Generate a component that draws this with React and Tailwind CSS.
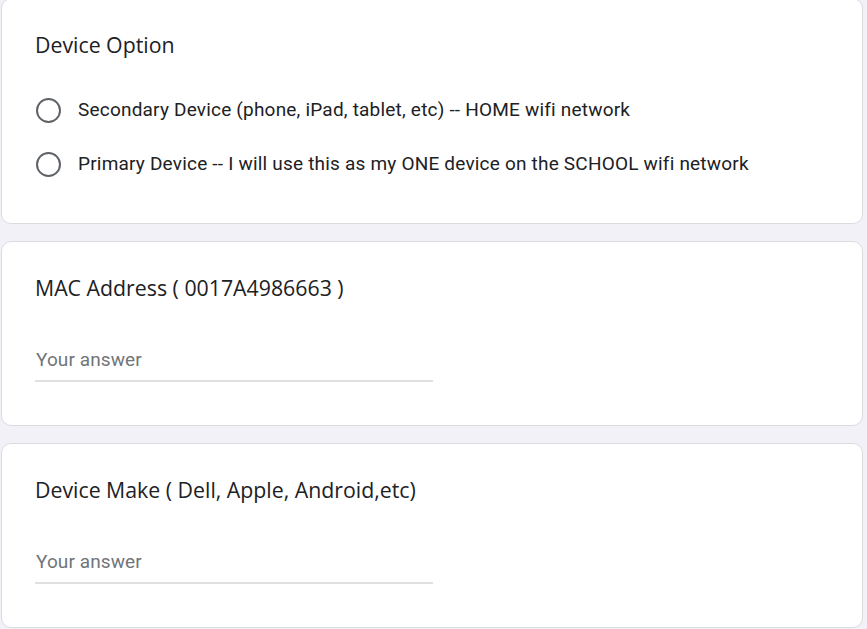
import React, { useState } from "react";

const titleFont = { fontFamily: '"Open Sans", Arial, sans-serif' };

const options = [
  "Secondary Device (phone, iPad, tablet, etc) -- HOME wifi network",
  "Primary Device -- I will use this as my ONE device on the SCHOOL wifi network",
];

const TextQuestion = ({ title }) => {
  const [value, setValue] = useState("");
  return (
    <div className="w-[862px] bg-white border border-[#dadce0] rounded-[10px] pt-[31px] pb-[43px] pl-[33px]">
      <div className="text-[21.3px] leading-[30px] text-[#202124]" style={titleFont}>
        {title}
      </div>
      <div className="mt-[45px] w-[398px]">
        <input
          type="text"
          value={value}
          onChange={(e) => setValue(e.target.value)}
          placeholder="Your answer"
          className="block w-full pl-[1px] h-[24px] leading-[24px] text-[19px] tracking-[0.1px] text-[#202124] placeholder:text-[#70757a] outline-none font-['Roboto',Arial,sans-serif]"
        />
        <div className="mt-[8px] h-[2px] bg-[#e0e0e0]" />
      </div>
    </div>
  );
};

const App = () => {
  const [selected, setSelected] = useState(null);

  return (
    <div className="min-h-screen bg-[#f2f1f7] pl-[1px] overflow-hidden font-['Roboto',Arial,sans-serif]">
      <div className="flex flex-col gap-[17px] -mt-[2px]">
        <div className="w-[862px] bg-white border border-[#dadce0] rounded-[10px] pt-[31px] pb-[46px] pl-[33px]">
          <div className="text-[21.3px] leading-[30px] text-[#202124]" style={titleFont}>
            Device Option
          </div>
          <div className="mt-[37px] flex flex-col gap-[28px]">
            {options.map((opt, i) => (
              <label key={i} className="flex items-center h-[26px] cursor-pointer" onClick={() => setSelected(i)}>
                <span className="w-[25px] h-[25px] ml-[1px] rounded-full border-[2.5px] border-[#5f6368] flex items-center justify-center shrink-0">
                  {selected === i && <span className="w-[12px] h-[12px] rounded-full bg-[#673ab7]" />}
                </span>
                <span className="ml-[17px] text-[19px] tracking-[0.2px] leading-[24px] text-[#202124]">{opt}</span>
              </label>
            ))}
          </div>
        </div>

        <TextQuestion title="MAC Address ( 0017A4986663 )" />
        <TextQuestion title="Device Make ( Dell, Apple, Android,etc)" />
      </div>
    </div>
  );
};

export default App;
